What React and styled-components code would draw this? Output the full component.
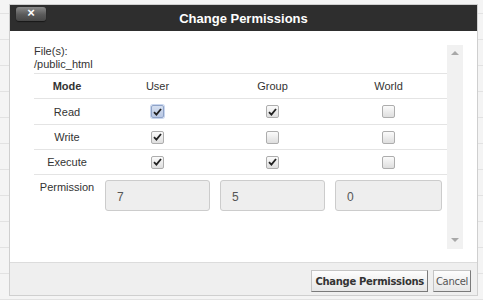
import React from "react";
import styled, { createGlobalStyle } from "styled-components";

const Global = createGlobalStyle`
  html, body { margin: 0; padding: 0; }
  body {
    width: 483px; height: 300px; overflow: hidden;
    background: #f4f4f4;
    font-family: "Liberation Sans", Arial, sans-serif;
  }
`;

const Page = styled.div`
  position: relative;
  width: 483px;
  height: 300px;
  overflow: hidden;
`;

const FileList = styled.div`
  display: flex;
  flex-direction: column;
  padding-top: 13px;
`;

const FileRow = styled.div`
  height: 25px;
  border-top: 1px solid #e2e2e2;
`;

const Dialog = styled.div`
  position: absolute;
  left: 9px;
  top: 4px;
  width: 469px;
  height: 292px;
  box-sizing: border-box;
  border: 1px solid #cfcfcf;
  background: #fff;
  display: flex;
  flex-direction: column;
`;

const TitleBar = styled.div`
  position: relative;
  height: 26px;
  flex: none;
  background: #2e2e2e;
  display: flex;
  align-items: center;
  justify-content: center;
  color: #fff;
  font-weight: bold;
  font-size: 13px;
`;

const CloseButton = styled.div`
  position: absolute;
  left: 6px;
  top: 2px;
  width: 30px;
  height: 14px;
  border-radius: 3px;
  background: linear-gradient(#8a8a8a, #5a5a5a 55%, #474747);
  box-shadow: 0 1px 1px rgba(0,0,0,0.5);
  color: #fff;
  font-size: 13px;
  font-weight: bold;
  line-height: 12px;
  text-align: center;
`;

const Body = styled.div`
  flex: 1;
  display: flex;
  padding: 14px 14px 13px 24px;
  background: #fff;
`;

const Content = styled.div`
  flex: 1;
  color: #333;
  font-size: 11px;
`;

const FileLabel = styled.div`
  line-height: 13px;
`;

const Grid = styled.div`
  display: grid;
  grid-template-columns: 66px 115px 115px 1fr;
  margin-top: 2px;
`;

const Cell = styled.div`
  height: ${p => p.$h || 25}px;
  border-top: 1px solid #e4e4e4;
  display: flex;
  align-items: ${p => (p.$top ? "flex-start" : "center")};
  justify-content: center;
  font-weight: ${p => (p.$bold ? "bold" : "normal")};
  padding: ${p => (p.$pad ? p.$pad : "0")};
  box-sizing: border-box;
`;

const Box = styled.span`
  width: 11px;
  height: 11px;
  border: 1px solid ${p => (p.$focus ? "#8fa3c8" : "#adadad")};
  border-radius: 2px;
  background: ${p =>
    p.$focus
      ? "linear-gradient(#d5dff0, #b9c8e4)"
      : "linear-gradient(#fbfbfb, #dedede)"};
  display: flex;
  align-items: center;
  justify-content: center;
  box-shadow: ${p => (p.$focus ? "0 0 0 1px #c9d6ee" : "none")};
`;

const PermInput = styled.div`
  width: 100%;
  height: 31px;
  box-sizing: border-box;
  border: 1px solid #cccccc;
  border-radius: 3px;
  background: #eeeeee;
  color: #555;
  font-size: 12px;
  display: flex;
  align-items: center;
  padding: 2px 0 0 11px;
`;

const Scrollbar = styled.div`
  width: 16px;
  background: #f1f1f1;
  display: flex;
  flex-direction: column;
  justify-content: space-between;
  align-items: center;
  padding: 6px 0 7px;
`;

const Arrow = styled.span`
  width: 0;
  height: 0;
  border-left: 4px solid transparent;
  border-right: 4px solid transparent;
  ${p =>
    p.$down
      ? "border-top: 4px solid #a8a8a8;"
      : "border-bottom: 4px solid #a8a8a8;"}
`;

const Footer = styled.div`
  flex: none;
  height: 33px;
  box-sizing: border-box;
  background: #efefef;
  border-top: 1px solid #dcdcdc;
  display: flex;
  justify-content: flex-end;
  align-items: flex-start;
  gap: 5px;
  padding: 7px 6px 0 0;
`;

const Button = styled.div`
  height: 20px;
  padding: 0 ${p => (p.$bold ? 3 : 2)}px;
  background: linear-gradient(#fdfdfd, #e6e6e6);
  border: 1px solid #c4c4c4;
  border-right-color: #7a7a7a;
  border-bottom-color: #7a7a7a;
  font-family: "DejaVu Sans", Verdana, sans-serif;
  font-size: 10px;
  letter-spacing: -0.3px;
  font-weight: ${p => (p.$bold ? "bold" : "normal")};
  color: ${p => (p.$bold ? "#333" : "#555")};
  display: flex;
  align-items: center;
`;

const Check = () => (
  <svg width="9" height="8" viewBox="0 0 9 8">
    <path d="M1 4.2 L3.4 6.6 L8 1" fill="none" stroke="#222" strokeWidth="1.8" />
  </svg>
);

const CheckBox = ({ checked, focus }) => (
  <Box $focus={focus}>{checked ? <Check /> : null}</Box>
);

const rows = [
  { name: "Read", v: [true, true, false] },
  { name: "Write", v: [true, false, false] },
  { name: "Execute", v: [true, true, false] },
];

export default function App() {
  return (
    <Page>
      <Global />
      <FileList>
        {Array.from({ length: 12 }).map((_, i) => (
          <FileRow key={i} />
        ))}
      </FileList>
      <Dialog>
        <TitleBar>
          <CloseButton>×</CloseButton>
          Change Permissions
        </TitleBar>
        <Body>
          <Content>
            <FileLabel>File(s):</FileLabel>
            <FileLabel>/public_html</FileLabel>
            <Grid>
              <Cell $bold>Mode</Cell>
              <Cell>User</Cell>
              <Cell>Group</Cell>
              <Cell>World</Cell>
              {rows.map((r, ri) => (
                <React.Fragment key={r.name}>
                  <Cell $h={ri === 0 ? 26 : 25}>{r.name}</Cell>
                  {r.v.map((c, ci) => (
                    <Cell key={ci} $h={ri === 0 ? 26 : 25}>
                      <CheckBox checked={c} focus={ri === 0 && ci === 0} />
                    </Cell>
                  ))}
                </React.Fragment>
              ))}
              <Cell $h={40} $top $pad="6px 0 0 0">Permission</Cell>
              <Cell $h={40} $top $pad="5px 5px 0 5px"><PermInput>7</PermInput></Cell>
              <Cell $h={40} $top $pad="5px 5px 0 5px"><PermInput>5</PermInput></Cell>
              <Cell $h={40} $top $pad="5px 5px 0 5px"><PermInput>0</PermInput></Cell>
            </Grid>
          </Content>
          <Scrollbar>
            <Arrow />
            <Arrow $down />
          </Scrollbar>
        </Body>
        <Footer>
          <Button $bold>Change Permissions</Button>
          <Button>Cancel</Button>
        </Footer>
      </Dialog>
    </Page>
  );
}
